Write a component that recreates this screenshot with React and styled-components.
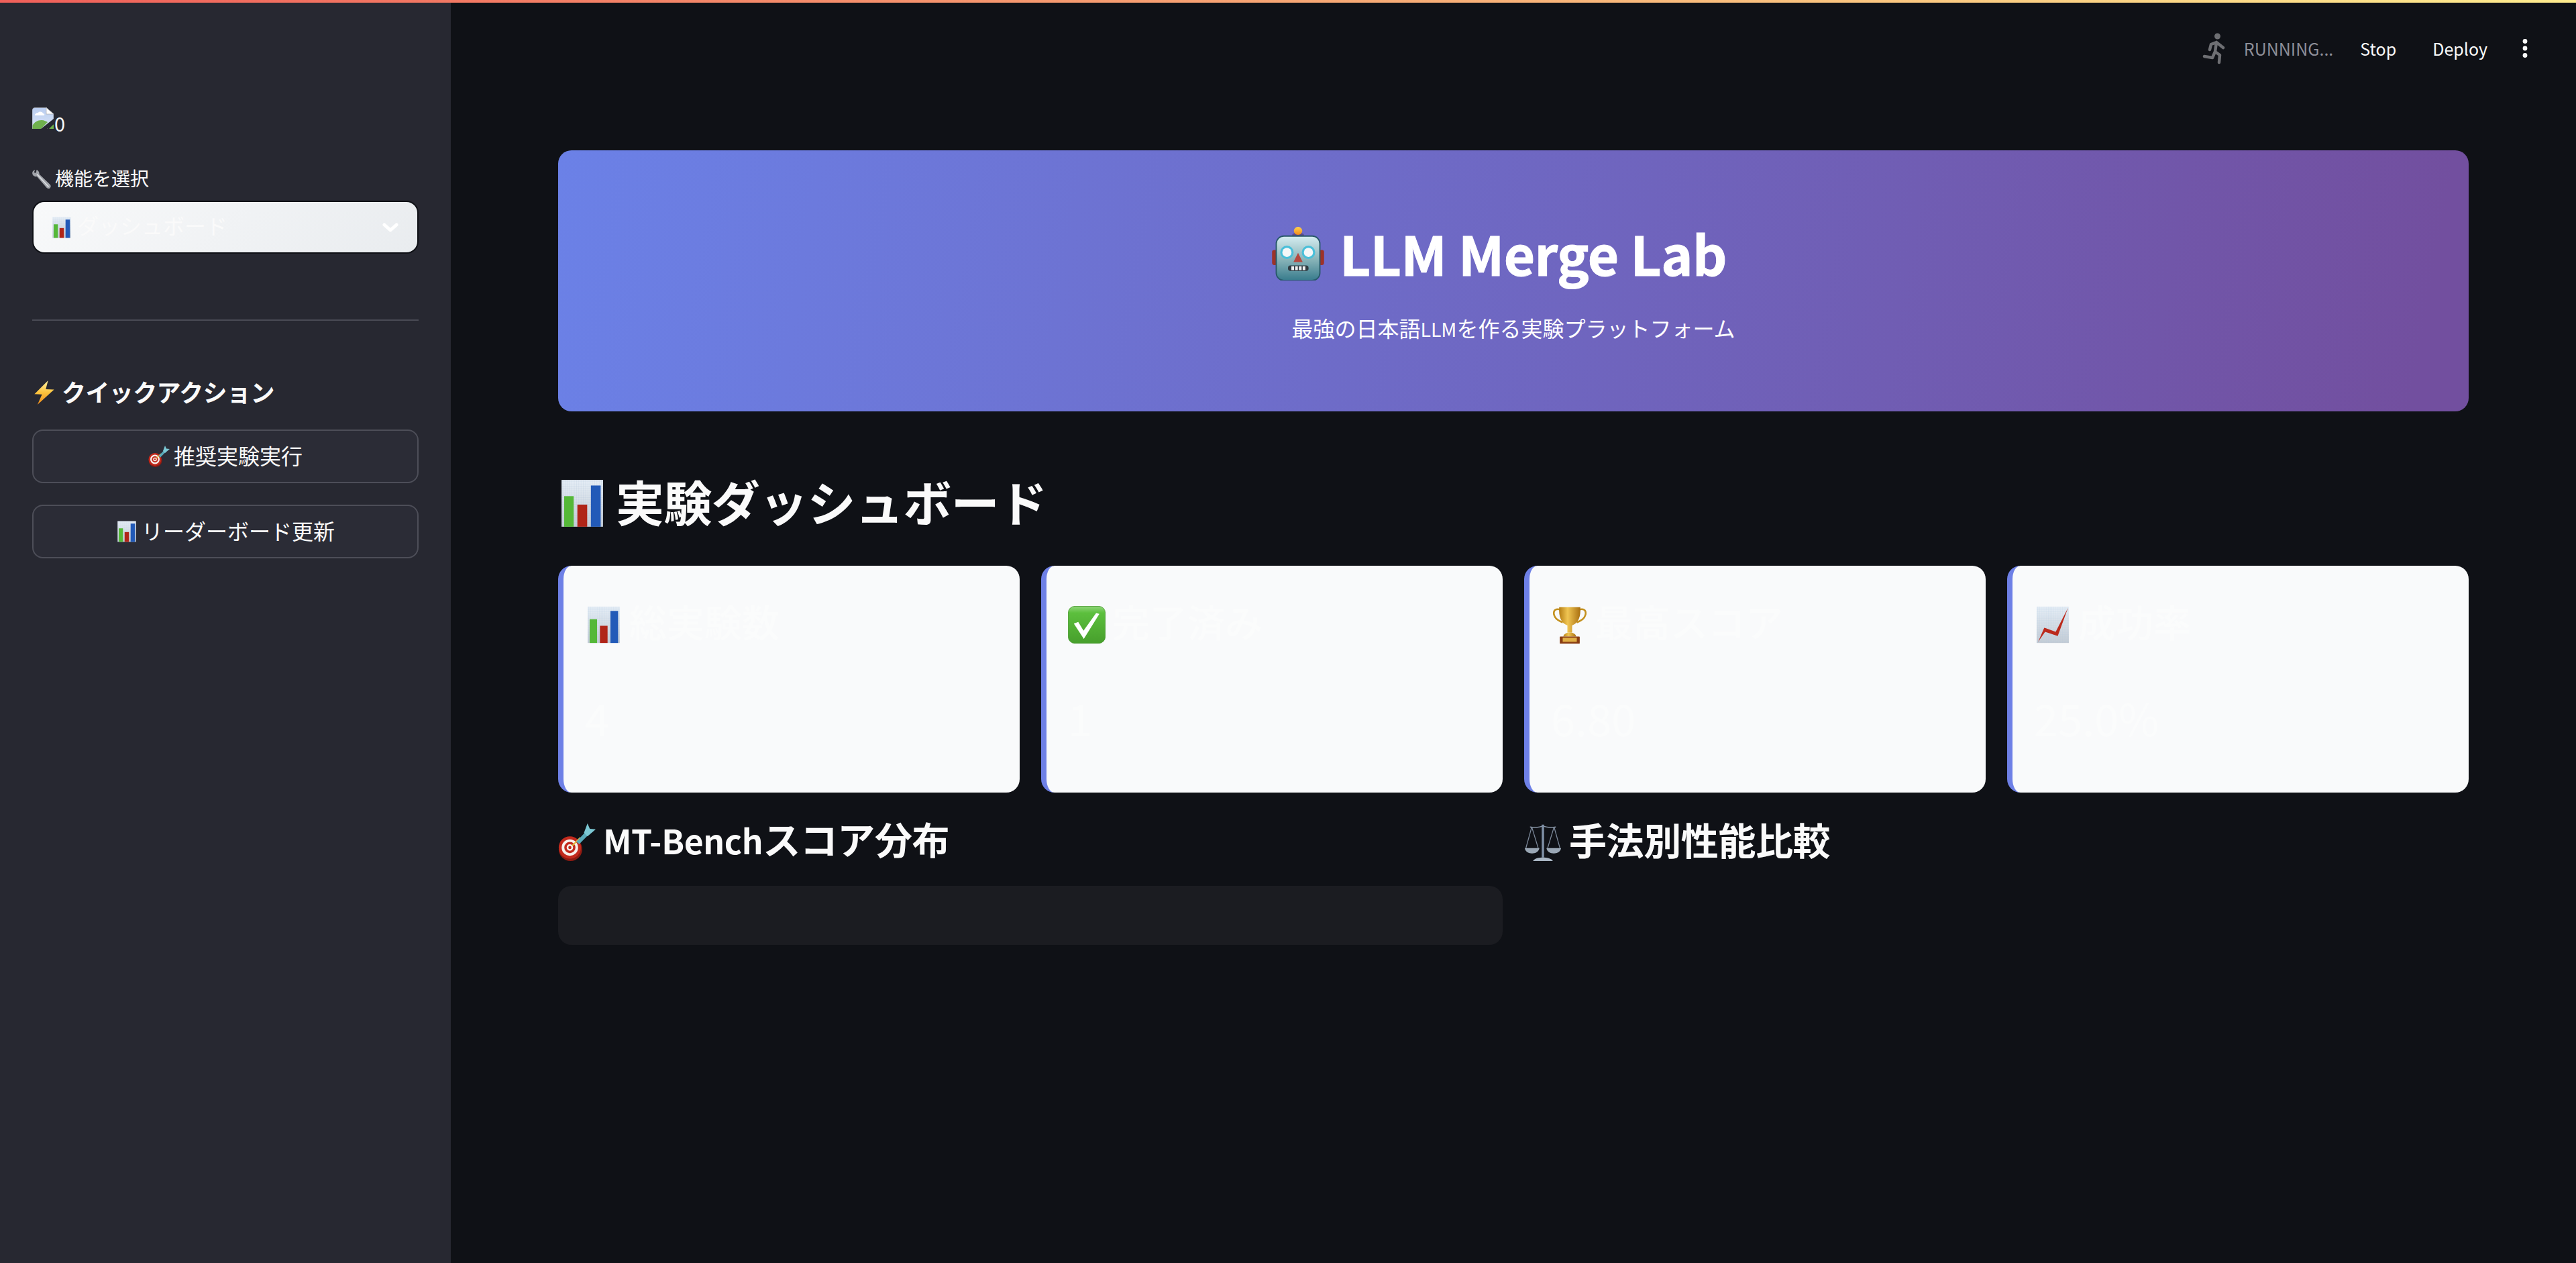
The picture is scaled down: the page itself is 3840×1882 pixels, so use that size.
import React from "react";
import styled, { createGlobalStyle } from "styled-components";

const FONT = `"Noto Sans CJK JP", "Noto Sans", sans-serif`;

const Global = createGlobalStyle`
  html, body { margin: 0; padding: 0; background: #0f1116; }
  body { font-family: ${FONT}; color: #fafafa; }
  * { box-sizing: border-box; }
`;

const Shell = styled.div`
  position: relative;
  display: flex;
  width: 3840px;
  height: 1882px;
  overflow: hidden;
  background: #0f1116;
`;
const Decoration = styled.div`
  position: absolute;
  top: 0;
  left: 0;
  right: 0;
  height: 4px;
  z-index: 2;
  background: linear-gradient(90deg, #f0605a, #feec8e);
`;
/* Raises text inside a fixed-height flex row, leaving the drawn emoji centred */
const Lifted = styled.span`
  margin-bottom: ${(p) => p.$by * 2}px;
`;
/* The CJK face carries Latin letters about 10% larger than the reference */
const Latin = styled.span`
  font-size: 0.89em;
`;

/* Sidebar */
const Sidebar = styled.aside`
  flex: 0 0 672px;
  display: flex;
  flex-direction: column;
  padding: 160px 48px 0;
  background: #272831;
`;
const Logo = styled.div`
  display: flex;
  align-items: flex-end;
  height: 38px;
  gap: 1px;
`;
const LogoIcon = styled.svg`
  width: 32px;
  height: 32px;
  margin-bottom: 6px;
  flex: none;
`;
const LogoAlt = styled.span`
  font-size: 29px;
  line-height: 1;
`;
const FieldLabel = styled.label`
  display: flex;
  align-items: center;
  gap: 6px;
  height: 40px;
  margin-top: 49px;
  font-size: 28px;
  line-height: 40px;
`;
const Select = styled.div`
  display: flex;
  align-items: center;
  gap: 7px;
  height: 79px;
  margin-top: 12px;
  padding: 0 26px;
  border: 2px solid #0f1116;
  border-radius: 18px;
  background: linear-gradient(135deg, #f8f9fa 0%, #e9ecef 100%);
  color: #fafafa;
  font-size: 32px;
`;
const SelectValue = styled(Lifted)`
  flex: 1;
`;
const Chevron = styled.svg`
  width: 24px;
  height: 14px;
  flex: none;
  margin-right: 2px;
`;
const Rule = styled.hr`
  width: 100%;
  height: 2px;
  margin: 98px 0 0;
  border: 0;
  background: #4a4b55;
`;
const QuickTitle = styled.h3`
  display: flex;
  align-items: center;
  gap: 8px;
  height: 48px;
  margin: 83px 0 31px;
  font-size: 36px;
  line-height: 48px;
  font-weight: 700;
  letter-spacing: -0.6px;
`;
const ActionStack = styled.div`
  display: flex;
  flex-direction: column;
  gap: 32px;
`;
const ActionButton = styled.button`
  display: flex;
  align-items: center;
  justify-content: center;
  gap: 6px;
  height: 80px;
  border: 2px solid #4d4e58;
  border-radius: 16px;
  background: #2b2c36;
  color: #fafafa;
  font-family: ${FONT};
  font-size: 32px;
`;

/* Main */
const Main = styled.main`
  flex: 1;
  display: flex;
  flex-direction: column;
  min-width: 0;
`;
const TopBar = styled.header`
  flex: none;
  display: flex;
  align-items: center;
  justify-content: flex-end;
  height: 144px;
  padding-right: 70px;
  font-size: 25px;
`;
const RunMan = styled.svg`
  width: 34px;
  height: 47px;
  flex: none;
`;
const Running = styled.span`
  margin: 0 40px 0 28px;
  color: #8d8e97;
`;
const TopAction = styled.span`
  margin-right: ${(p) => p.$gap}px;
  color: #fafafa;
`;
const Dots = styled.svg`
  width: 12px;
  height: 28px;
  flex: none;
`;
const Content = styled.div`
  display: flex;
  flex-direction: column;
  padding: 80px 160px 0;
`;
const Hero = styled.section`
  display: flex;
  flex-direction: column;
  align-items: center;
  height: 389px;
  padding-top: 104px;
  border-radius: 20px;
  background: linear-gradient(100deg, #6b81e7 0%, #724f9f 97%);
`;
const HeroTitle = styled.h1`
  display: flex;
  align-items: center;
  gap: 22px;
  height: 100px;
  margin: 0;
  padding-right: 43px;
  font-size: 80px;
  line-height: 100px;
  font-weight: 700;
  letter-spacing: -0.5px;
  -webkit-text-stroke: 1px #fff;
  color: #fff;
`;
const HeroSub = styled.p`
  margin: 30px 0 0;
  font-size: 32px;
  line-height: 60px;
  color: #fff;
`;
const PageTitle = styled.h2`
  display: flex;
  align-items: center;
  gap: 14px;
  height: 90px;
  margin: 92px 0 48px;
  font-size: 72px;
  line-height: 90px;
  font-weight: 700;
  letter-spacing: -0.6px;
`;
const Metrics = styled.div`
  display: grid;
  grid-template-columns: repeat(4, 1fr);
  gap: 32px;
`;
const Card = styled.article`
  height: 338px;
  padding: 48px 32px 0;
  border-left: 8px solid #6e80e6;
  border-radius: 20px;
  background: #f9fafb;
  color: #fbfcfc;
`;
const CardLabel = styled.h3`
  display: flex;
  align-items: center;
  gap: 10px;
  height: 80px;
  margin: 0;
  font-size: 56px;
  line-height: 80px;
  font-weight: 500;
`;
const CardValue = styled.div`
  margin-top: 48px;
  font-size: 65px;
  line-height: 100px;
  font-weight: 400;
`;
const Columns = styled.div`
  display: grid;
  grid-template-columns: 1fr 1fr;
  gap: 32px;
  margin-top: 39px;
`;
const SectionTitle = styled.h3`
  display: flex;
  align-items: center;
  gap: 11px;
  height: 70px;
  margin: 0;
  font-size: 56px;
  line-height: 70px;
  font-weight: 700;
  letter-spacing: -0.4px;
`;
const Skeleton = styled.div`
  height: 88px;
  margin-top: 30px;
  border-radius: 20px;
  background: #1b1c21;
`;

/* Emoji drawings */
const EmojiSvg = styled.svg.attrs({ viewBox: "0 0 64 64" })`
  width: ${(p) => p.$size}px;
  height: ${(p) => p.$size}px;
  flex: none;
`;

const GridPaper = () => (
  <>
    <defs>
      <linearGradient id="paper" x1="0" y1="0" x2="0" y2="1">
        <stop offset="0" stopColor="#e6eef6" />
        <stop offset="1" stopColor="#c4ccd5" />
      </linearGradient>
      <pattern id="paperGrid" width="3" height="3" patternUnits="userSpaceOnUse">
        <path d="M3 0H0V3" fill="none" stroke="#a9c0da" strokeWidth=".5" opacity=".6" />
      </pattern>
    </defs>
    <rect x="4.5" y="1" width="55" height="62" fill="url(#paper)" />
    <rect x="4.5" y="1" width="55" height="62" fill="url(#paperGrid)" />
  </>
);
const BarChart = ({ size }) => (
  <EmojiSvg $size={size}>
    <GridPaper />
    <rect x="8" y="22.5" width="12.6" height="40.5" fill="#55b838" />
    <rect x="25.5" y="33.7" width="13" height="29.3" fill="#b02518" />
    <rect x="43.4" y="8.4" width="13" height="54.6" fill="#225ab8" />
  </EmojiSvg>
);
const ChartUp = ({ size }) => (
  <EmojiSvg $size={size}>
    <GridPaper />
    <path d="M7 61 17.5 37 37 44 58 3 40.500 51 19 44Z" fill="#bb2a1c" />
  </EmojiSvg>
);
const CheckBox = ({ size }) => (
  <EmojiSvg $size={size}>
    <defs>
      <linearGradient id="checkBg" x1="0" y1="0" x2="0" y2="1">
        <stop offset="0" stopColor="#8fd678" />
        <stop offset=".18" stopColor="#5cbf3d" />
        <stop offset="1" stopColor="#479f2c" />
      </linearGradient>
    </defs>
    <rect x="0.5" y="0.5" width="63" height="63" rx="11" fill="url(#checkBg)" stroke="#4a9a32" />
    <path d="M10 30 17.5 27 26.500 42 48 12 53.500 13.500 27 56Z" fill="#fff" />
  </EmojiSvg>
);
const Trophy = ({ size }) => (
  <EmojiSvg $size={size}>
    <defs>
      <linearGradient id="gold" x1="0" y1="0" x2="1" y2="0">
        <stop offset="0" stopColor="#b57d14" />
        <stop offset=".4" stopColor="#f0c552" />
        <stop offset="1" stopColor="#a96f10" />
      </linearGradient>
    </defs>
    <path d="M16 6C4 3 3 12 7 19c3 5 8 7 13 9M48 6c12-3 13 6 9 13-3 5-8 7-13 9" fill="none" stroke="#c4911f" strokeWidth="3" />
    <path d="M14 2h36c1 16-3 27-14 31v12h-8V33C17 29 13 18 14 2Z" fill="url(#gold)" />
    <path d="M21 52c1-5 6-7 11-7s10 2 11 7Z" fill="url(#gold)" />
    <rect x="15" y="52" width="34" height="12" rx="1" fill="#8a3d12" />
    <rect x="20" y="54" width="24" height="7" fill="#e0ae45" />
  </EmojiSvg>
);
const Dart = ({ size }) => (
  <EmojiSvg $size={size}>
    <circle cx="21" cy="44" r="20" fill="#8e1b12" />
    <circle cx="20" cy="41" r="19" fill="#c22a1d" />
    <circle cx="20" cy="41" r="14" fill="#f6f2ee" />
    <circle cx="20" cy="41" r="9.500" fill="#c22a1d" />
    <circle cx="20" cy="41" r="5.500" fill="#f6f2ee" />
    <circle cx="20" cy="41" r="2.600" fill="#c22a1d" />
    <path d="M24 38 38 24" stroke="#e2b93b" strokeWidth="2.500" />
    <path d="M31 31 46 15l5 5-15 15Z" fill="#59a9b9" />
    <path d="M44 16 50 0l4 9 10 1-14 12Z" fill="#7cc8d4" />
  </EmojiSvg>
);
const Scales = ({ size }) => (
  <EmojiSvg $size={size}>
    <g fill="none" stroke="#7d8a9b" strokeWidth="1.400">
      <path d="M13 6 3 42M13 6l11 36M51 6 40 42M51 6l10 36" />
    </g>
    <path d="M32 3c-4 2-12 4-22 2v2c10 1 18 0 22-2 4 2 12 3 22 2V5C44 7 36 5 32 3Z" fill="#8a97a8" />
    <rect x="30" y="2" width="4" height="56" fill="#7f90a6" />
    <path d="M1 42h25c-1 6-6 9-12.500 9S2 48 1 42ZM38 42h25c-1 6-6 9-12.500 9S39 48 38 42Z" fill="#9aa7b5" />
    <path d="M15 64c3-5 11-6 17-6s14 1 17 6Z" fill="#a9b6c4" />
  </EmojiSvg>
);
const Zap = ({ size }) => (
  <EmojiSvg $size={size}>
    <defs>
      <linearGradient id="zap" x1="0" y1="0" x2="0" y2="1">
        <stop offset="0" stopColor="#fff0a0" />
        <stop offset=".5" stopColor="#fcc33d" />
        <stop offset="1" stopColor="#ef8a1a" />
      </linearGradient>
    </defs>
    <path d="M42 0 6 36l20 1L14 64 58 24l-22-1Z" fill="url(#zap)" />
  </EmojiSvg>
);
const Wrench = ({ size }) => (
  <EmojiSvg $size={size}>
    <path d="M10 0C2 2-2 10 2 17c3 5 9 7 14 6l33 38c4 4 9 4 12 1 3-4 3-8 0-12L24 15c1-7-3-12-9-15l-2 11-7-2Z" fill="#a0a3a9" />
    <path d="M16 15 56 58" stroke="#dcdfe3" strokeWidth="3.500" />
  </EmojiSvg>
);
const Robot = ({ size }) => (
  <EmojiSvg $size={size}>
    <defs>
      <linearGradient id="head" x1="0" y1="0" x2="0" y2="1">
        <stop offset="0" stopColor="#d6edf1" />
        <stop offset=".5" stopColor="#8db7bb" />
        <stop offset="1" stopColor="#377b8c" />
      </linearGradient>
      <linearGradient id="bulb" x1="0" y1="0" x2="0" y2="1">
        <stop offset="0" stopColor="#ffd34d" />
        <stop offset="1" stopColor="#f08a1c" />
      </linearGradient>
    </defs>
    <rect x="1" y="27.500" width="6" height="18" rx="2.500" fill="#9c3229" />
    <rect x="57" y="27.500" width="6" height="18" rx="2.500" fill="#9c3229" />
    <path d="M25 10c0-2 3-3 7-3s7 1 7 3l-2 3H27Z" fill="#5d4c8a" />
    <ellipse cx="32" cy="4.800" rx="5" ry="4.800" fill="url(#bulb)" />
    <rect x="6" y="11" width="52" height="53" rx="9" fill="url(#head)" stroke="#28596a" strokeWidth="1.500" />
    <circle cx="18.700" cy="30.400" r="8" fill="#49bfd9" />
    <circle cx="44.400" cy="30.400" r="8" fill="#49bfd9" />
    <circle cx="18.700" cy="30.400" r="5.500" fill="#f4f7f8" />
    <circle cx="44.400" cy="30.400" r="5.500" fill="#f4f7f8" />
    <path d="M32 31 37.500 42H26.500Z" fill="#b5483f" />
    <rect x="20" y="46" width="24.500" height="6.500" rx="3" fill="#2f3a40" />
    <path d="M24 47h3.200v4.500H24zM28.500 47h3.200v4.500h-3.200zM33 47h3.200v4.500H33zM37.500 47h3.200v4.500h-3.200z" fill="#eef1f2" />
  </EmojiSvg>
);

const metrics = [
  { Icon: BarChart, label: "総実験数", value: "4" },
  { Icon: CheckBox, label: "完了済み", value: "1" },
  { Icon: Trophy, label: "最高スコア", value: "6.80" },
  { Icon: ChartUp, label: "成功率", value: "25.0%" },
];

export default function App() {
  return (
    <Shell>
      <Global />
      <Decoration />
      <Sidebar>
        <Logo>
          <LogoIcon viewBox="0 0 32 32">
            <defs>
              <linearGradient id="sky" x1="0" y1="0" x2="0" y2="1">
                <stop offset="0" stopColor="#b9cdf0" />
                <stop offset="1" stopColor="#d9e4f6" />
              </linearGradient>
            </defs>
            <path d="M4 0.500H21L32 10V22L22 32H0V4.500C0 2 2 0.500 4 0.500Z" fill="url(#sky)" stroke="#9a9da3" strokeWidth="0.800" />
            <path d="M21 0.500V10H32Z" fill="#fff" stroke="#aeb1b6" strokeWidth="0.800" />
            <path d="M4 12c0-3 3-4 5-4 1-2 6-2 7 1 2 0 3 2 2 3Z" fill="#fff" />
            <path d="M0.500 32V27C3 22 8 19 14 19c4 0 7 2 9 3l-10 10ZM25 32l7-7v7Z" fill="#6fb04d" />
            <path d="M13 32 32 17v8L22 32Z" fill="#272831" />
          </LogoIcon>
          <LogoAlt>0</LogoAlt>
        </Logo>
        <FieldLabel>
          <Wrench size={28} />
          <Lifted $by={2}>機能を選択</Lifted>
        </FieldLabel>
        <Select>
          <BarChart size={32} />
          <SelectValue $by={4}>ダッシュボード</SelectValue>
          <Chevron viewBox="0 0 24 14">
            <path d="M3 3 12 11 21 3" fill="none" stroke="#fff" strokeWidth="5" strokeLinecap="round" strokeLinejoin="round" />
          </Chevron>
        </Select>
        <Rule />
        <QuickTitle>
          <Zap size={36} />
          <Lifted $by={2}>クイックアクション</Lifted>
        </QuickTitle>
        <ActionStack>
          <ActionButton>
            <Dart size={32} />
            <Lifted $by={2}>推奨実験実行</Lifted>
          </ActionButton>
          <ActionButton>
            <BarChart size={32} />
            <Lifted $by={2}>リーダーボード更新</Lifted>
          </ActionButton>
        </ActionStack>
      </Sidebar>
      <Main>
        <TopBar>
          <RunMan viewBox="0 0 34 47">
            <circle cx="22.500" cy="5" r="4.500" fill="#6e6f73" />
            <path
              d="M21 14 19 28M21 14 31 22M21 14 13 17 11 25M19 28 26 33 25 44M19 28 15 37 3 35"
              fill="none"
              stroke="#6e6f73"
              strokeWidth="4.500"
              strokeLinecap="round"
              strokeLinejoin="round"
            />
          </RunMan>
          <Running>RUNNING...</Running>
          <TopAction $gap={54}>Stop</TopAction>
          <TopAction $gap={50}>Deploy</TopAction>
          <Dots viewBox="0 0 12 28">
            <circle cx="6" cy="3.500" r="3.400" fill="#fafafa" />
            <circle cx="6" cy="14" r="3.400" fill="#fafafa" />
            <circle cx="6" cy="24.500" r="3.400" fill="#fafafa" />
          </Dots>
        </TopBar>
        <Content>
          <Hero>
            <HeroTitle>
              <Robot size={80} />
              <Lifted $by={2}>LLM Merge Lab</Lifted>
            </HeroTitle>
            <HeroSub>
              最強の日本語<Latin>LLM</Latin>を作る実験プラットフォーム
            </HeroSub>
          </Hero>
          <PageTitle>
            <BarChart size={72} />
            <Lifted $by={4}>実験ダッシュボード</Lifted>
          </PageTitle>
          <Metrics>
            {metrics.map(({ Icon, label, value }) => (
              <Card key={label}>
                <CardLabel>
                  <Icon size={56} />
                  <Lifted $by={6}>{label}</Lifted>
                </CardLabel>
                <CardValue>{value}</CardValue>
              </Card>
            ))}
          </Metrics>
          <Columns>
            <div>
              <SectionTitle>
                <Dart size={56} />
                <Lifted $by={5}>
                  <Latin>MT-Bench</Latin>スコア分布
                </Lifted>
              </SectionTitle>
              <Skeleton />
            </div>
            <div>
              <SectionTitle>
                <Scales size={56} />
                <Lifted $by={5}>手法別性能比較</Lifted>
              </SectionTitle>
            </div>
          </Columns>
        </Content>
      </Main>
    </Shell>
  );
}
